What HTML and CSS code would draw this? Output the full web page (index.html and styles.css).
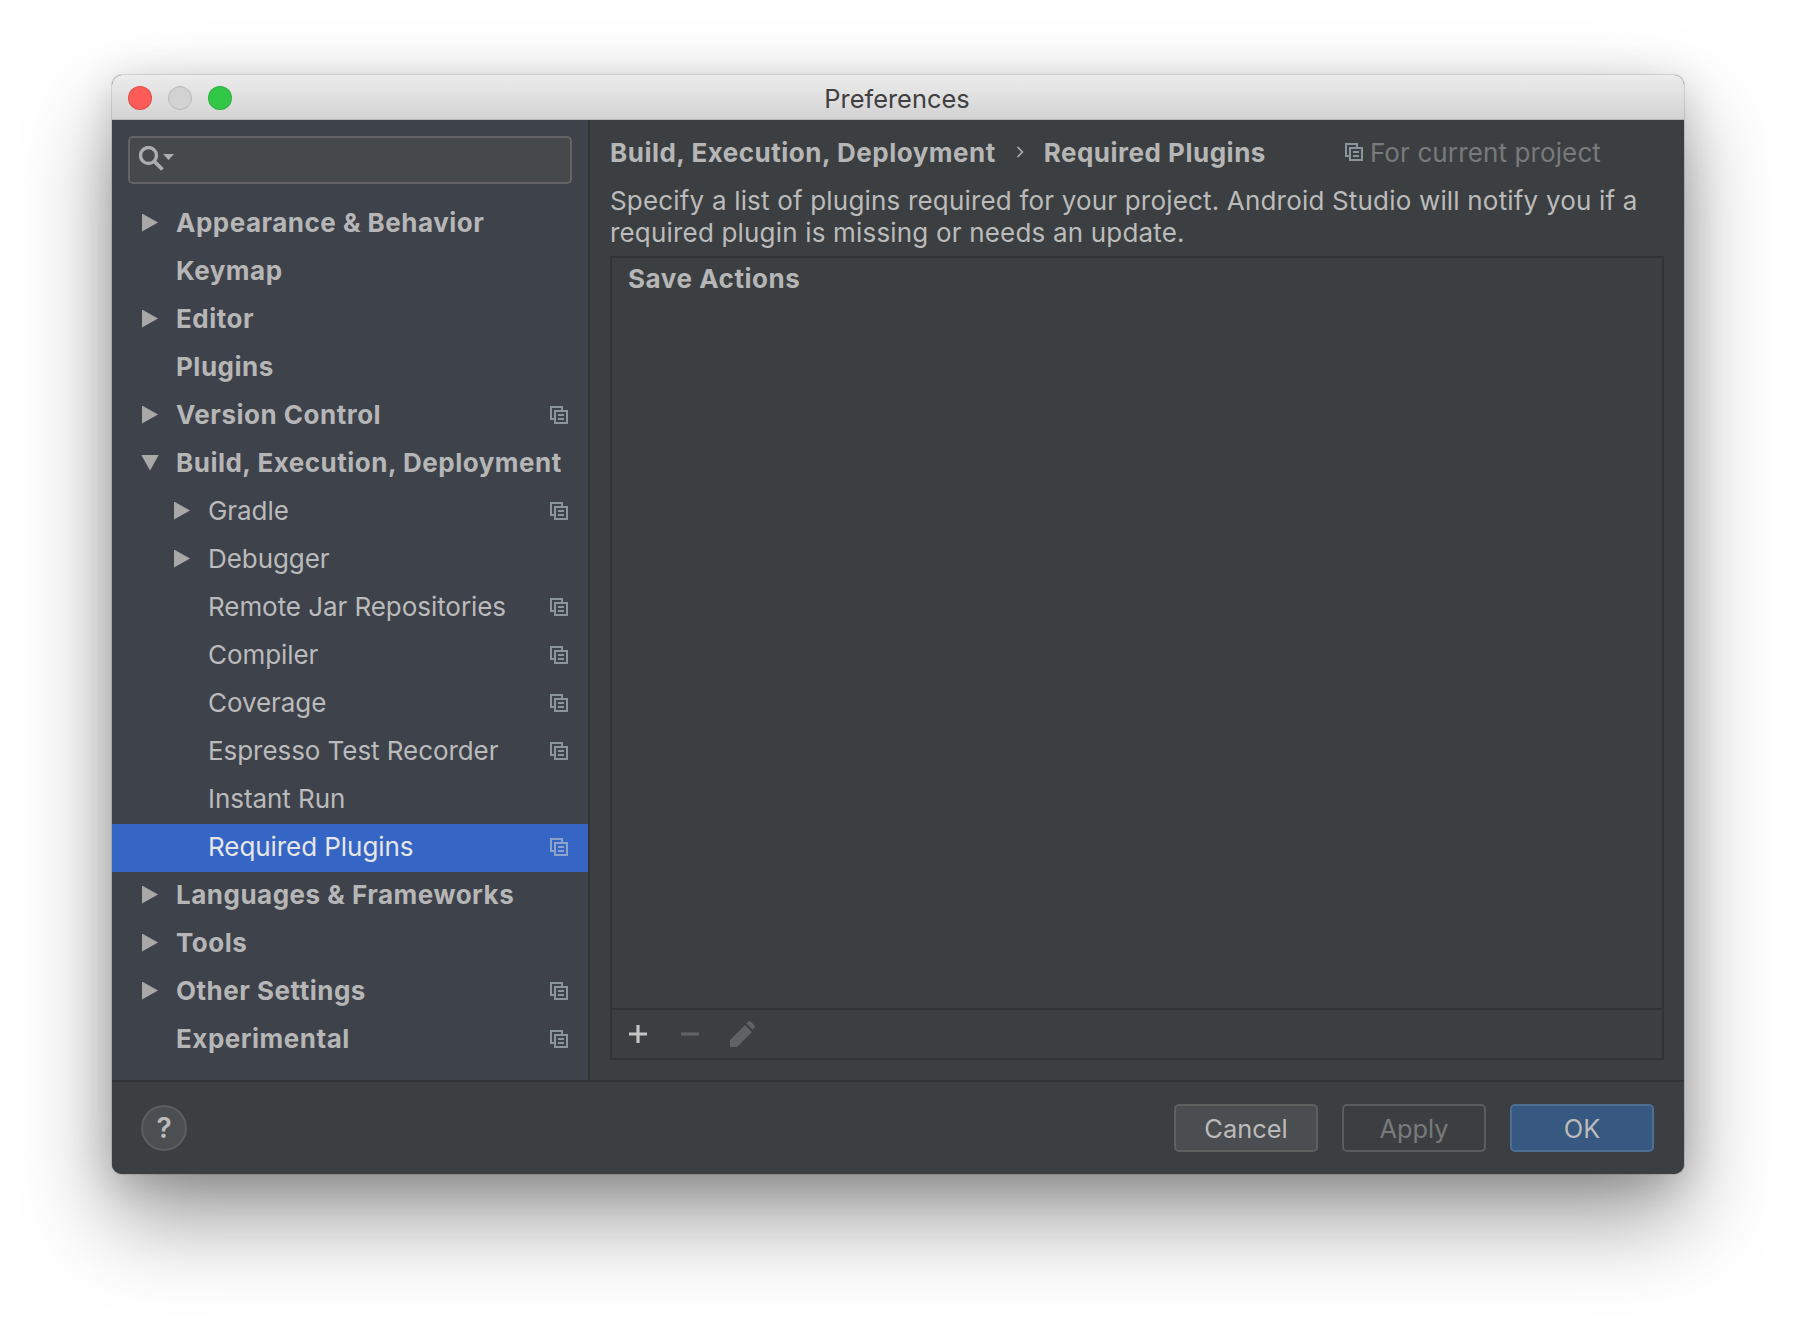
FILE: index.html
```html
<!DOCTYPE html>
<html lang="en">
<head>
<meta charset="utf-8">
<title>Preferences</title>
<link rel="stylesheet" href="styles.css">
</head>
<body>
<svg class="defs" width="0" height="0" aria-hidden="true">
  <symbol id="copy" viewBox="0 0 18 18">
    <path d="M4.5 13H1V1h11v4" fill="none" stroke="currentColor" stroke-width="2"/>
    <rect x="5" y="5" width="12" height="12" fill="none" stroke="currentColor" stroke-width="2"/>
    <path d="M8 9h6M8 13h6" fill="none" stroke="currentColor" stroke-width="2"/>
  </symbol>
</svg>
<main class="window">
  <header class="titlebar">
    <div class="lights">
      <span class="light red"></span><span class="light grey"></span><span class="light green"></span>
    </div>
    <div class="title">Preferences</div>
  </header>
  <div class="body">
    <aside class="sidebar">
      <div class="search">
        <svg class="search-icon" width="36" height="26" viewBox="0 0 36 26">
          <circle cx="9.500" cy="9.500" r="8" fill="none" stroke="#adadad" stroke-width="3.400"/>
          <path d="M15 15l8.500 8.500" stroke="#adadad" stroke-width="3.800" fill="none"/>
          <path d="M24 8h11l-5.500 6z" fill="#adadad"/>
        </svg>
      </div>
      <ul class="tree">
        <li class="row top"><i class="tri right"></i><span>Appearance &amp; Behavior</span></li>
        <li class="row top"><i class="tri none"></i><span>Keymap</span></li>
        <li class="row top"><i class="tri right"></i><span>Editor</span></li>
        <li class="row top"><i class="tri none"></i><span>Plugins</span></li>
        <li class="row top"><i class="tri right"></i><span>Version Control</span><svg class="copy"><use href="#copy"/></svg></li>
        <li class="row top"><i class="tri down"></i><span>Build, Execution, Deployment</span></li>
        <li class="row sub"><i class="tri right"></i><span>Gradle</span><svg class="copy"><use href="#copy"/></svg></li>
        <li class="row sub"><i class="tri right"></i><span>Debugger</span></li>
        <li class="row sub"><i class="tri none"></i><span>Remote Jar Repositories</span><svg class="copy"><use href="#copy"/></svg></li>
        <li class="row sub"><i class="tri none"></i><span>Compiler</span><svg class="copy"><use href="#copy"/></svg></li>
        <li class="row sub"><i class="tri none"></i><span>Coverage</span><svg class="copy"><use href="#copy"/></svg></li>
        <li class="row sub"><i class="tri none"></i><span>Espresso Test Recorder</span><svg class="copy"><use href="#copy"/></svg></li>
        <li class="row sub"><i class="tri none"></i><span>Instant Run</span></li>
        <li class="row sub selected"><i class="tri none"></i><span>Required Plugins</span><svg class="copy"><use href="#copy"/></svg></li>
        <li class="row top"><i class="tri right"></i><span>Languages &amp; Frameworks</span></li>
        <li class="row top"><i class="tri right"></i><span>Tools</span></li>
        <li class="row top"><i class="tri right"></i><span>Other Settings</span><svg class="copy"><use href="#copy"/></svg></li>
        <li class="row top"><i class="tri none"></i><span>Experimental</span><svg class="copy"><use href="#copy"/></svg></li>
      </ul>
    </aside>
    <section class="panel">
      <div class="crumbs">
        <strong>Build, Execution, Deployment</strong>
        <svg class="chev" width="8" height="14" viewBox="0 0 8 14"><path d="M1.500 2l5 5-5 5" fill="none" stroke="#afb1b3" stroke-width="1.600"/></svg>
        <strong>Required Plugins</strong>
        <span class="scope"><svg class="copy"><use href="#copy"/></svg>For current project</span>
      </div>
      <p class="desc">Specify a list of plugins required for your project. Android Studio will notify you if a required plugin is missing or needs an update.</p>
      <div class="listbox">
        <div class="list"><div class="item">Save Actions</div></div>
        <div class="toolbar">
          <svg width="24" height="24" viewBox="0 0 24 24"><path d="M12 3v18M3 12h18" stroke="#c4c4c4" stroke-width="3.200" fill="none"/></svg>
          <svg width="24" height="24" viewBox="0 0 24 24"><path d="M3 12h18" stroke="#5f6163" stroke-width="3.200" fill="none"/></svg>
          <svg width="28" height="28" viewBox="2 0 28 28"><path d="M2 27v-7L17 5l7 7L9 27zM18.500 3.500l2-2q1-1 2 0l4 4q1 1 0 2l-2 2z" fill="#606264"/></svg>
        </div>
      </div>
    </section>
  </div>
  <footer class="footer">
    <button class="help" type="button">?</button>
    <div class="actions">
      <button class="btn cancel" type="button">Cancel</button>
      <button class="btn apply" type="button">Apply</button>
      <button class="btn ok" type="button">OK</button>
    </div>
  </footer>
</main>
</body>
</html>
```

FILE: styles.css
```css
* { box-sizing: border-box; }
html, body { margin: 0; height: 100%; }
body {
  background: #fff;
  padding: 75px 112px 0;
  font-family: Inter, "Liberation Sans", sans-serif;
  font-size: 26px;
  color: #bbb;
  overflow: hidden;
}
.defs { position: absolute; }
.window {
  width: 1572px;
  height: 1099px;
  border-radius: 10px;
  display: flex;
  flex-direction: column;
  background: #3c3f41;
  box-shadow: 0 0 0 1px rgba(0,0,0,.1), 0 44px 90px rgba(0,0,0,.4), 0 8px 40px rgba(0,0,0,.16);
}
.titlebar {
  position: relative;
  height: 45px;
  flex: none;
  background: linear-gradient(#ececec, #d3d3d3);
  border-bottom: 1px solid #b9b9b9;
  border-radius: 10px 10px 0 0;
  display: flex;
  align-items: center;
  justify-content: center;
}
.lights {
  position: absolute;
  left: 16px;
  top: 11px;
  display: flex;
  gap: 16px;
}
.light { width: 24px; height: 24px; border-radius: 50%; border: 1px solid rgba(0,0,0,.12); }
.red { background: #fc5b57; }
.grey { background: #d2d2d2; border-color: #b8b8b8; }
.green { background: #33c748; }
.title { color: #404040; font-size: 25.400px; margin-left: -2px; padding-top: 3px; }
.body { flex: 1; display: flex; min-height: 0; }
.sidebar {
  width: 476px;
  flex: none;
  background: #3e424b;
  padding-top: 16px;
}
.search {
  width: 444px;
  height: 48px;
  margin-left: 16px;
  background: #45494a;
  border: 2px solid #646464;
  border-radius: 5px;
  display: flex;
  align-items: center;
  padding-left: 9px;
}
.search-icon { margin-top: -2px; }
.tree { list-style: none; margin: 16px 0 0; padding: 0; }
.row {
  height: 48px;
  display: flex;
  align-items: center;
  padding-bottom: 3px;
  position: relative;
  white-space: nowrap;
}
.row .copy { position: absolute; left: 438px; top: 14px; }
.top { padding-left: 30px; font-weight: 700; letter-spacing: .5px; color: #b6b6b6; }
.sub { padding-left: 62px; letter-spacing: -.06px; }
.selected { background: #3565c5; color: #e6e6e6; }
.tri { width: 16px; height: 18px; flex: none; margin-right: 18px; display: block; }
.tri.right { background: #a8a8a8; clip-path: polygon(0 0, 100% 50%, 0 100%); }
.tri.down { width: 18px; height: 16px; margin-left: -1px; margin-right: 17px; background: #a8a8a8; clip-path: polygon(0 0, 100% 0, 50% 100%); }
.copy { width: 18px; height: 18px; color: #8b969c; flex: none; }
.selected .copy { color: #8ba3c9; }
.panel {
  flex: 1;
  min-width: 0;
  border-left: 2px solid #313335;
  padding: 13px 20px 20px;
  display: flex;
  flex-direction: column;
}
.crumbs {
  height: 38px;
  display: flex;
  align-items: center;
  white-space: nowrap;
}
.crumbs strong { font-weight: 700; letter-spacing: .5px; color: #b6b6b6; }
.chev { margin: 0 20px; }
.scope {
  margin-left: 79px;
  display: flex;
  align-items: center;
  gap: 7px;
  font-weight: 400;
  letter-spacing: .12px;
  color: #787a7b;
}
.desc { margin: 14px 0 7px; line-height: 32px; letter-spacing: .18px; }
.listbox {
  flex: 1;
  min-height: 0;
  display: flex;
  flex-direction: column;
  border: 2px solid #313335;
}
.list { flex: 1; padding: 5px 16px; }
.item { font-weight: 700; letter-spacing: .55px; line-height: 32px; color: #b6b6b6; }
.toolbar {
  height: 50px;
  flex: none;
  border-top: 2px solid #313335;
  display: flex;
  align-items: center;
  padding-left: 14px;
  gap: 28px;
}
.footer {
  height: 94px;
  flex: none;
  border-top: 2px solid #313335;
  padding: 22px 30px 0 29px;
  display: flex;
  justify-content: space-between;
  align-items: flex-start;
  border-radius: 0 0 10px 10px;
  background: #3c3f41;
}
.help {
  width: 46px;
  height: 46px;
  margin-top: 1px;
  border-radius: 50%;
  padding: 0;
  background: #4b4f51;
  border: 2px solid #5c5e5f;
  color: #bbb;
  font: 600 28px Inter, "Liberation Sans", sans-serif;
}
.actions { display: flex; gap: 24px; }
.btn {
  width: 144px;
  height: 48px;
  border-radius: 5px;
  padding: 1px 0 0;
  font: 400 25.400px Inter, "Liberation Sans", sans-serif;
  background: #4b4e50;
  border: 2px solid #5e6060;
  color: #bbb;
}
.apply { background: #3c3f41; color: #787a7b; border-color: #5a5c5d; }
.ok { background: #375880; border-color: #4a6f93; }
```
